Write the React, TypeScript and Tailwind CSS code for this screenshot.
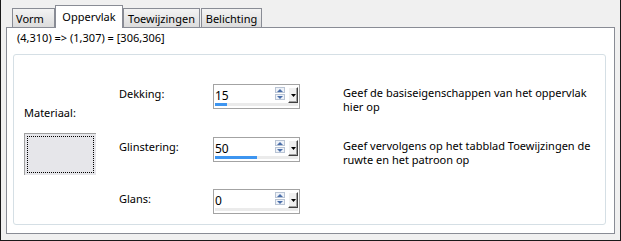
import React from "react";

const font = { fontFamily: '"Noto Sans", "Open Sans", sans-serif' };

function Tab({ label, active, w, center }: { label: string; active?: boolean; w: string; center?: boolean }) {
  if (active) {
    return (
      <div className={`relative z-10 -mb-px flex h-[23px] ${w} justify-center border border-b-0 border-[#898c95] bg-white pt-[3px] text-[11px] leading-[15px] text-black`}>
        {label}
      </div>
    );
  }
  return (
    <div className={`mt-[3px] flex h-[19px] ${w} ${center ? "justify-center" : "pl-[3px]"} border border-b-0 border-[#898c95] bg-gradient-to-b from-[#f3f3f3] to-[#dcdcdc] pt-[2px] text-[11px] leading-[15px] text-black`}>
      {label}
    </div>
  );
}

function Spin({ value, pct }: { value: string; pct: number }) {
  return (
    <div className="relative h-[25px] w-[87px] border border-[#a3a3a3] bg-white">
      <span className="absolute left-[1px] top-[4px] text-[12px] leading-[14px] text-black">{value}</span>
      {/* up / down */}
      <div className="absolute left-[61px] top-[2px] flex h-[13px] w-[10px] flex-col gap-[1px]">
        <div className="flex h-[6px] items-center justify-center border border-[#b9c4d4] bg-[#eef2f8]">
          <svg width="6" height="3" viewBox="0 0 6 3"><path d="M0 3 L3 0 L6 3 Z" fill="#4a6ea9" /></svg>
        </div>
        <div className="flex h-[6px] items-center justify-center border border-[#b9c4d4] bg-[#eef2f8]">
          <svg width="6" height="3" viewBox="0 0 6 3"><path d="M0 0 L6 0 L3 3 Z" fill="#4a6ea9" /></svg>
        </div>
      </div>
      {/* dropdown */}
      <div className="absolute left-[74px] top-[2px] flex h-[16px] w-[10px] items-center justify-center border border-b-[#404040] border-l-white border-r-[#404040] border-t-white bg-[#f0f0f0] shadow-[inset_-1px_-1px_0_#a0a0a0]">
        <svg width="5" height="3" viewBox="0 0 5 3"><path d="M0 0 L5 0 L2.5 3 Z" fill="#000" /></svg>
      </div>
      {/* progress */}
      <div className="absolute bottom-[2px] left-[1px] right-[1px] h-[3px] bg-[#ebebeb]">
        <div className="h-full bg-[#3d95f0]" style={{ width: `${pct}%` }} />
      </div>
    </div>
  );
}

function Row({ label, value, pct, desc }: { label: string; value: string; pct: number; desc: React.ReactNode }) {
  return (
    <div className="flex h-[25px] items-start">
      <div className="mt-[3px] w-[94px] text-[11px] leading-[14px]">{label}</div>
      <Spin value={value} pct={pct} />
      <div className="ml-[43px] mt-[2px] whitespace-nowrap text-[11px] leading-[14px]">{desc}</div>
    </div>
  );
}

export default function App() {
  return (
    <div style={font} className="h-[241px] w-[621px] border-b border-l border-r border-[#1a1a1a] bg-[#f0f0f0] text-black">
      <div className="flex pl-[11px] pt-[5px]">
        <Tab label="Vorm" w="w-[43px]" />
        <Tab label="Oppervlak" active w="w-[68px]" />
        <Tab label="Toewijzingen" w="w-[77px]" center />
        <div className="w-[1px]" />
        <Tab label="Belichting" w="w-[61px]" center />
      </div>
      <div className="ml-[5px] mr-[5px] h-[207px] border border-[#898c95] bg-white pl-[6px] pr-[8px]">
        <div className="pl-[4px] pt-[2px] text-[11px] leading-[16px]">(4,310) =&gt; (1,307) = [306,306]</div>
        <div className="mt-[8px] flex h-[171px] rounded-[3px] border border-[#d5dfe5] pt-[29px]">
          <div className="flex w-[105px] flex-col pl-[10px] pt-[22px]">
            <div className="text-[11px] leading-[14px]">Materiaal:</div>
            <div className="mt-[13px] flex h-[42px] w-[72px] border-l border-t border-[#a0a0a0] bg-[#e6e6ea] p-[2px]">
              <div className="flex-1 border border-dotted border-black" />
            </div>
          </div>
          <div className="flex flex-col gap-[28px]">
            <Row label="Dekking:" value="15" pct={15} desc={<>Geef de basiseigenschappen van het oppervlak<br />hier op</>} />
            <Row label="Glinstering:" value="50" pct={50} desc={<>Geef vervolgens op het tabblad Toewijzingen de<br />ruwte en het patroon op</>} />
            <div className="-mt-[1px]">
              <Row label="Glans:" value="0" pct={0} desc={null} />
            </div>
          </div>
        </div>
      </div>
    </div>
  );
}
